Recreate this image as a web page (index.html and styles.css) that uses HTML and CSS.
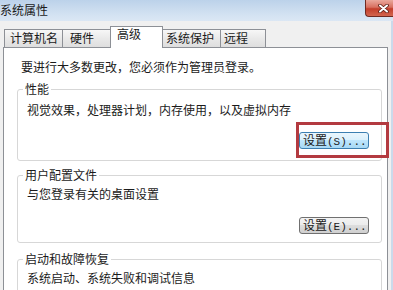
FILE: index.html
```html
<!DOCTYPE html>
<html lang="zh-CN">
<head>
<meta charset="utf-8">
<title>系统属性</title>
<link rel="stylesheet" href="styles.css">
</head>
<body>
<div class="window">
  <header class="titlebar">
    <span class="title">系统属性</span>
    <button class="close" aria-label="关闭">
      <svg width="11" height="9" viewBox="0 0 11 9">
        <path d="M2 1.5 L9 7.5 M9 1.5 L2 7.5" stroke="#5b1e16" stroke-width="3.6" stroke-linecap="round"/>
        <path d="M2 1.5 L9 7.5 M9 1.5 L2 7.5" stroke="#ffffff" stroke-width="2" stroke-linecap="round"/>
      </svg>
    </button>
  </header>
  <div class="client">
    <nav class="tabs">
      <span class="tab tab-name">计算机名</span>
      <span class="tab tab-hw">硬件</span>
      <span class="tab tab-adv active">高级</span>
      <span class="tab tab-prot">系统保护</span>
      <span class="tab tab-remote">远程</span>
    </nav>
    <section class="panel">
      <p class="note">要进行大多数更改，您必须作为管理员登录。</p>
      <fieldset class="group group-perf">
        <legend>性能</legend>
        <p class="desc">视觉效果，处理器计划，内存使用，以及虚拟内存</p>
        <div class="actions">
          <span class="highlight"><button class="btn btn-default">设置<span class="mn">(S)...</span></button></span>
        </div>
      </fieldset>
      <fieldset class="group group-profile">
        <legend>用户配置文件</legend>
        <p class="desc">与您登录有关的桌面设置</p>
        <div class="actions">
          <button class="btn">设置<span class="mn">(E)...</span></button>
        </div>
      </fieldset>
      <fieldset class="group group-startup">
        <legend>启动和故障恢复</legend>
        <p class="desc">系统启动、系统失败和调试信息</p>
      </fieldset>
    </section>
  </div>
</div>
</body>
</html>
```
FILE: styles.css
```css
* { box-sizing: border-box; }
html, body { margin: 0; padding: 0; }
body {
  width: 393px;
  height: 290px;
  overflow: hidden;
  background: #f0f0f0;
  font-family: "Noto Sans CJK SC", "Noto Sans", sans-serif;
  font-size: 12px;
  color: #1b1b1b;
}
.window {
  width: 393px;
  height: 290px;
  display: flex;
  flex-direction: column;
  overflow: hidden;
}
.titlebar {
  flex: none;
  height: 21px;
  display: flex;
  justify-content: space-between;
  align-items: flex-start;
  background: linear-gradient(#bcd2ea, #d3e2f2 70%, #dbe7f4);
}
.title {
  line-height: 16px;
  padding-top: 2px;
  color: #1a1a1a;
}
.close {
  width: 28px;
  height: 17px;
  margin: 0;
  padding: 0 0 0 12px;
  border: 1px solid #6f2a22;
  border-top: none;
  border-right: none;
  border-radius: 0 0 0 4px;
  background: linear-gradient(#eaa89c, #d87060 45%, #c33e2b 55%, #d3664f);
  display: flex;
  align-items: center;
}
.client {
  flex: 1;
  display: flex;
  flex-direction: column;
  background: #f0f0f0;
  border-right: 2px solid #cbdaeb;
}
.tabs {
  flex: none;
  height: 21px;
  margin: 5px 0 0 4px;
  display: flex;
  align-items: flex-end;
  position: relative;
  z-index: 1;
}
.tab {
  height: 18px;
  line-height: 14px;
  padding: 1px 0 0 5px;
  border: 1px solid #8d9096;
  border-bottom: none;
  background: linear-gradient(#f7f7f7, #e9e9e9 50%, #dedede);
  color: #1b1b1b;
  white-space: nowrap;
}
.tab + .tab { margin-left: -1px; }
.tab-name { width: 59px; }
.tab-hw { width: 49px; padding-left: 7px; }
.tab-adv { width: 53px; padding-left: 6px; }
.tab-prot { width: 59px; padding-left: 3px; }
.tab-remote { width: 46px; padding-left: 3px; }
.tab.active {
  height: 22px;
  margin-bottom: -1px;
  padding-top: 0;
  background: #ffffff;
  position: relative;
  z-index: 2;
}
.panel {
  flex: 1;
  margin: 0 3px;
  padding: 11px 5px 0 13px;
  background: #ffffff;
  border: 1px solid #8d9096;
  border-bottom: none;
}
.note {
  margin: 0;
  padding-left: 4px;
  line-height: 16px;
}
.group {
  margin: 0;
  min-width: 0;
  border: 1px solid #d7d7d7;
  border-radius: 3px;
  padding: 3px 12px 8px 5px;
}
.group legend {
  padding: 0 2px;
  line-height: 16px;
  font-size: 12px;
}
.desc {
  margin: 0;
  padding-left: 4px;
  line-height: 16px;
}
.group-perf { margin-top: 6px; padding-top: 5px; padding-bottom: 11px; }
.group-perf .actions { margin-top: 14px; }
.group-profile { margin-top: 6px; }
.group-startup { margin-top: 8px; }
.actions {
  margin-top: 15px;
  display: flex;
  justify-content: flex-end;
}
.btn {
  width: 70px;
  height: 17px;
  margin: 0;
  padding: 0 0 0 3px;
  border: 1px solid #707070;
  border-radius: 3px;
  background: linear-gradient(#f3f3f3, #ebebeb 50%, #dddddd 50%, #cfcfcf);
  font-family: "Noto Sans CJK SC", sans-serif;
  font-size: 12px;
  line-height: 13px;
  color: #1b1b1b;
  text-align: left;
  white-space: nowrap;
  display: block;
}
.btn-default {
  border-color: #3c7fb1;
  background: linear-gradient(#eaf6fd, #d9f0fc 50%, #bee6fd 50%, #a7d9f5);
}
.mn {
  font-family: "Liberation Mono", "DejaVu Sans Mono", monospace;
  font-size: 11px;
}
.highlight {
  position: relative;
  display: block;
}
.highlight::after {
  content: "";
  position: absolute;
  left: -3px;
  top: -10px;
  right: -20px;
  bottom: -9px;
  border: 3px solid #b33a40;
  pointer-events: none;
}
```
